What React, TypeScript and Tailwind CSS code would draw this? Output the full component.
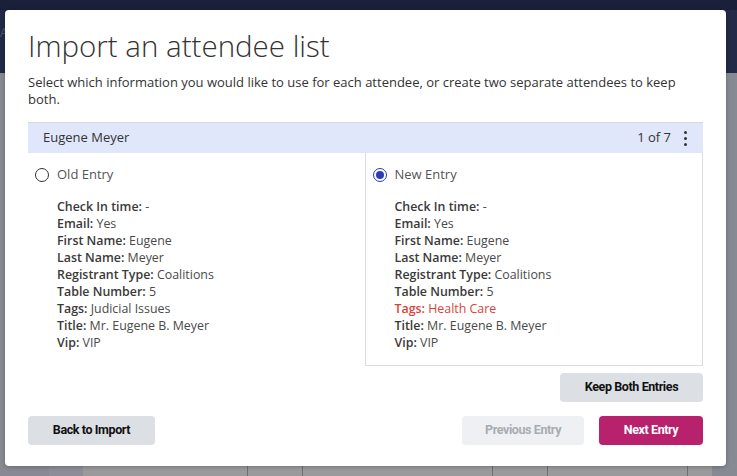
import React from 'react';

type Field = { label: string; value: string; changed?: boolean };

const OLD_FIELDS: Field[] = [
  { label: 'Check In time', value: '-' },
  { label: 'Email', value: 'Yes' },
  { label: 'First Name', value: 'Eugene' },
  { label: 'Last Name', value: 'Meyer' },
  { label: 'Registrant Type', value: 'Coalitions' },
  { label: 'Table Number', value: '5' },
  { label: 'Tags', value: 'Judicial Issues' },
  { label: 'Title', value: 'Mr. Eugene B. Meyer' },
  { label: 'Vip', value: 'VIP' },
];

const NEW_FIELDS: Field[] = [
  { label: 'Check In time', value: '-' },
  { label: 'Email', value: 'Yes' },
  { label: 'First Name', value: 'Eugene' },
  { label: 'Last Name', value: 'Meyer' },
  { label: 'Registrant Type', value: 'Coalitions' },
  { label: 'Table Number', value: '5' },
  { label: 'Tags', value: 'Health Care', changed: true },
  { label: 'Title', value: 'Mr. Eugene B. Meyer' },
  { label: 'Vip', value: 'VIP' },
];

const btnFont = { fontFamily: '"Liberation Sans Narrow", Roboto, sans-serif' };

const Radio = ({ checked }: { checked?: boolean }) => (
  <span
    className={`w-[14px] h-[14px] rounded-full flex items-center justify-center shrink-0 border-[1.5px] ${
      checked ? 'border-[#2b3db5]' : 'border-[#333]'
    }`}
  >
    {checked && <span className="w-[8px] h-[8px] rounded-full bg-[#2b3db5]" />}
  </span>
);

const EntryColumn = ({ title, fields, selected }: { title: string; fields: Field[]; selected?: boolean }) => (
  <div
    className={`flex-1 pl-[7px] pt-[12px] pb-[14px] ${
      selected ? 'border-l border-r border-b border-[#dcdde0]' : ''
    }`}
  >
    <div className="flex items-center gap-[8px] h-[20px] text-[13px] text-[#555]">
      <Radio checked={selected} />
      <span>{title}</span>
    </div>
    <div className="mt-[13px] pl-[22px] text-[12.4px] leading-[17px] text-[#4a4a4a]">
      {fields.map((f) => (
        <div key={f.label} className={f.changed ? 'text-[#d9443a]' : ''}>
          <span className={`font-semibold ${f.changed ? '' : 'text-[#3a3a3a]'}`}>{f.label}:</span> {f.value}
        </div>
      ))}
    </div>
  </div>
);

export default function App() {
  return (
    <div
      className="relative w-[737px] h-[476px] overflow-hidden bg-[#878a93]"
      style={{ fontFamily: '"Open Sans", Lato, sans-serif' }}
    >
      {/* page behind the overlay */}
      <div className="h-[10px] bg-[#1a2039]" />
      <div className="h-[63px] bg-[#222a47] pt-[14px] text-[12px] text-[#4d5670]">A</div>
      <div className="absolute left-[49px] right-[0px] bottom-0 h-[12px] flex">
        <div className="w-[34px] bg-[#8b8e96]" />
        <div className="w-[165px] bg-[#9a9a9c] border-r border-[#6f7076]" />
        <div className="w-[55px] bg-[#9a9a9c] border-r border-[#6f7076]" />
        <div className="w-[190px] bg-[#9a9a9c] border-r border-[#6f7076]" />
        <div className="w-[55px] bg-[#9a9a9c] border-r border-[#6f7076]" />
        <div className="w-[140px] bg-[#9a9a9c] border-r border-[#6f7076]" />
        <div className="w-[24px] bg-[#9a9a9c]" />
      </div>

      {/* modal */}
      <div className="absolute left-[5px] top-[10px] w-[721px] h-[456px] bg-white rounded-[4px] shadow-[0_1px_4px_rgba(0,0,0,0.25)] px-[23px] pt-[18px]">
        <h1 className="text-[29.5px] leading-[36px] font-light text-[#333]">Import an attendee list</h1>
        <p className="mt-[10px] text-[13px] leading-[17px] text-[#333] max-w-[665px]">
          Select which information you would like to use for each attendee, or create two separate attendees to keep both.
        </p>

        <div className="mt-[14px] border-t border-[#d6d9e0]">
          <div className="h-[30px] bg-[#e1e7fa] flex items-center justify-between pl-[15px] pr-[16px] text-[13px] text-[#333]">
            <span>Eugene Meyer</span>
            <div className="flex items-center gap-[13px]">
              <span>1 of 7</span>
              <span className="flex flex-col gap-[3px]">
                <span className="w-[3px] h-[3px] rounded-full bg-[#333]" />
                <span className="w-[3px] h-[3px] rounded-full bg-[#333]" />
                <span className="w-[3px] h-[3px] rounded-full bg-[#333]" />
              </span>
            </div>
          </div>
          <div className="flex">
            <EntryColumn title="Old Entry" fields={OLD_FIELDS} />
            <EntryColumn title="New Entry" fields={NEW_FIELDS} selected />
          </div>
        </div>

        <div className="mt-[7px] flex justify-end">
          <button
            className="h-[29px] w-[143px] rounded-[4px] bg-[#dcdfe3] text-[12.5px] tracking-[-0.4px] font-bold text-[#111]"
            style={btnFont}
          >
            Keep Both Entries
          </button>
        </div>

        <div className="mt-[14px] flex items-center justify-between">
          <button
            className="h-[29px] w-[127px] rounded-[4px] bg-[#dcdfe3] text-[12.5px] tracking-[-0.4px] font-bold text-[#111]"
            style={btnFont}
          >
            Back to Import
          </button>
          <div className="flex gap-[15px]">
            <button
              className="h-[29px] w-[122px] rounded-[4px] bg-[#eef0f3] text-[12.5px] tracking-[-0.4px] font-bold text-[#a8acb2]"
              style={btnFont}
            >
              Previous Entry
            </button>
            <button
              className="h-[29px] w-[104px] rounded-[4px] bg-[#b8216c] text-[12.5px] tracking-[-0.4px] font-bold text-white"
              style={btnFont}
            >
              Next Entry
            </button>
          </div>
        </div>
      </div>
    </div>
  );
}
